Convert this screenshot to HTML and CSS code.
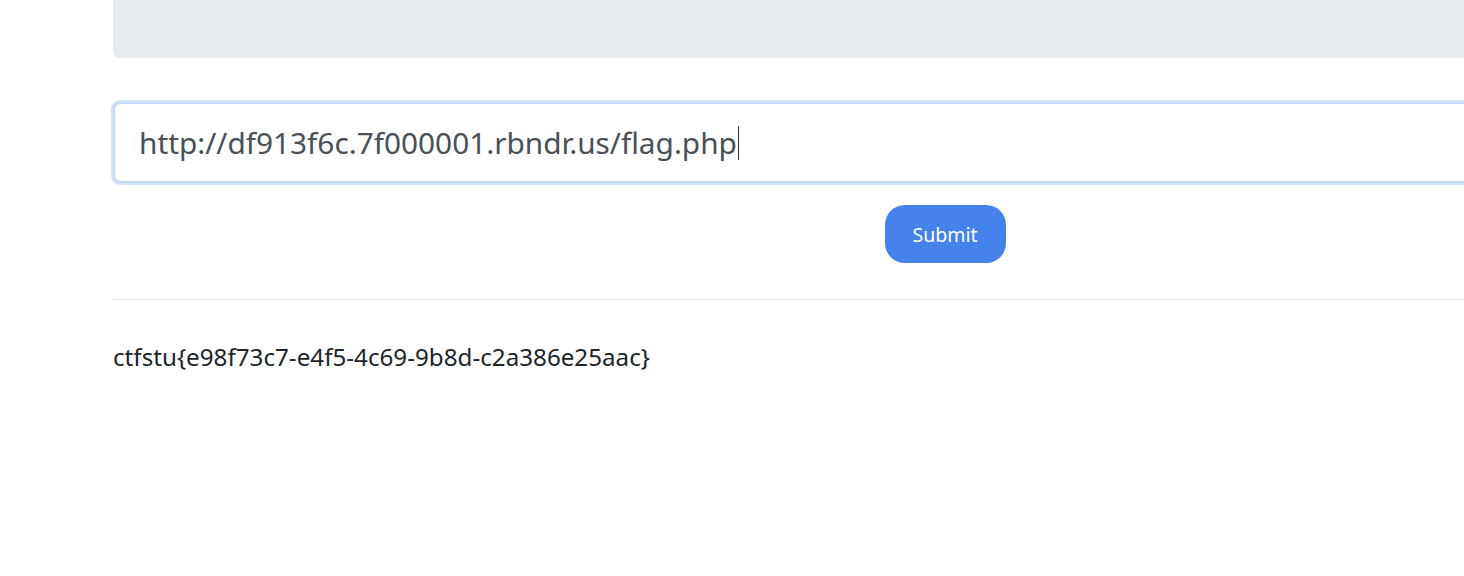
FILE: index.html
```html
<!DOCTYPE html>
<html>
<head>
<meta charset="utf-8">
<link rel="stylesheet" href="styles.css">
</head>
<body>
<div class="container">
  <div class="jumbo"></div>
  <form class="form">
    <div class="field">http://df913f6c.7f000001.rbndr.us/flag.php<span class="caret"></span></div>
    <div class="actions"><button type="button" class="btn">Submit</button></div>
  </form>
  <hr class="rule">
  <p class="flag">ctfstu{e98f73c7-e4f5-4c69-9b8d-c2a386e25aac}</p>
</div>
</body>
</html>
```
FILE: styles.css
```css
html, body { margin: 0; padding: 0; background: #fff; overflow: hidden; }
body { font-family: "Noto Sans", "Open Sans", sans-serif; color: #212529; }
.container { width: 1664px; margin-left: 113px; }
.jumbo { height: 58px; background: #e8ebee; border-radius: 0 0 6px 6px; }
.form { margin-top: 44px; }
.field {
  box-sizing: border-box; height: 81px; margin: 0;
  border: 2px solid #c5d8f7; box-shadow: 0 0 0 2px #d6e4fb;
  border-radius: 7px; background: #fff;
  padding: 0 24px; display: flex; align-items: center;
  font-size: 29.8px; color: #495057; letter-spacing: 0;
}
.caret { display: inline-block; width: 1px; height: 34px; background: #333; margin-left: 1px; }
.actions { display: flex; justify-content: center; margin-top: 22px; }
.btn {
  width: 121px; height: 58px; border: 0; border-radius: 20px;
  background: #4582ec; color: #fff; font-family: inherit; font-size: 19.5px; padding: 0;
}
.rule { border: 0; border-top: 1px solid #e5e5e5; margin: 36px 0 0; }
.flag { margin: 40px 0 0; font-size: 24.2px; color: #212529; }
```
